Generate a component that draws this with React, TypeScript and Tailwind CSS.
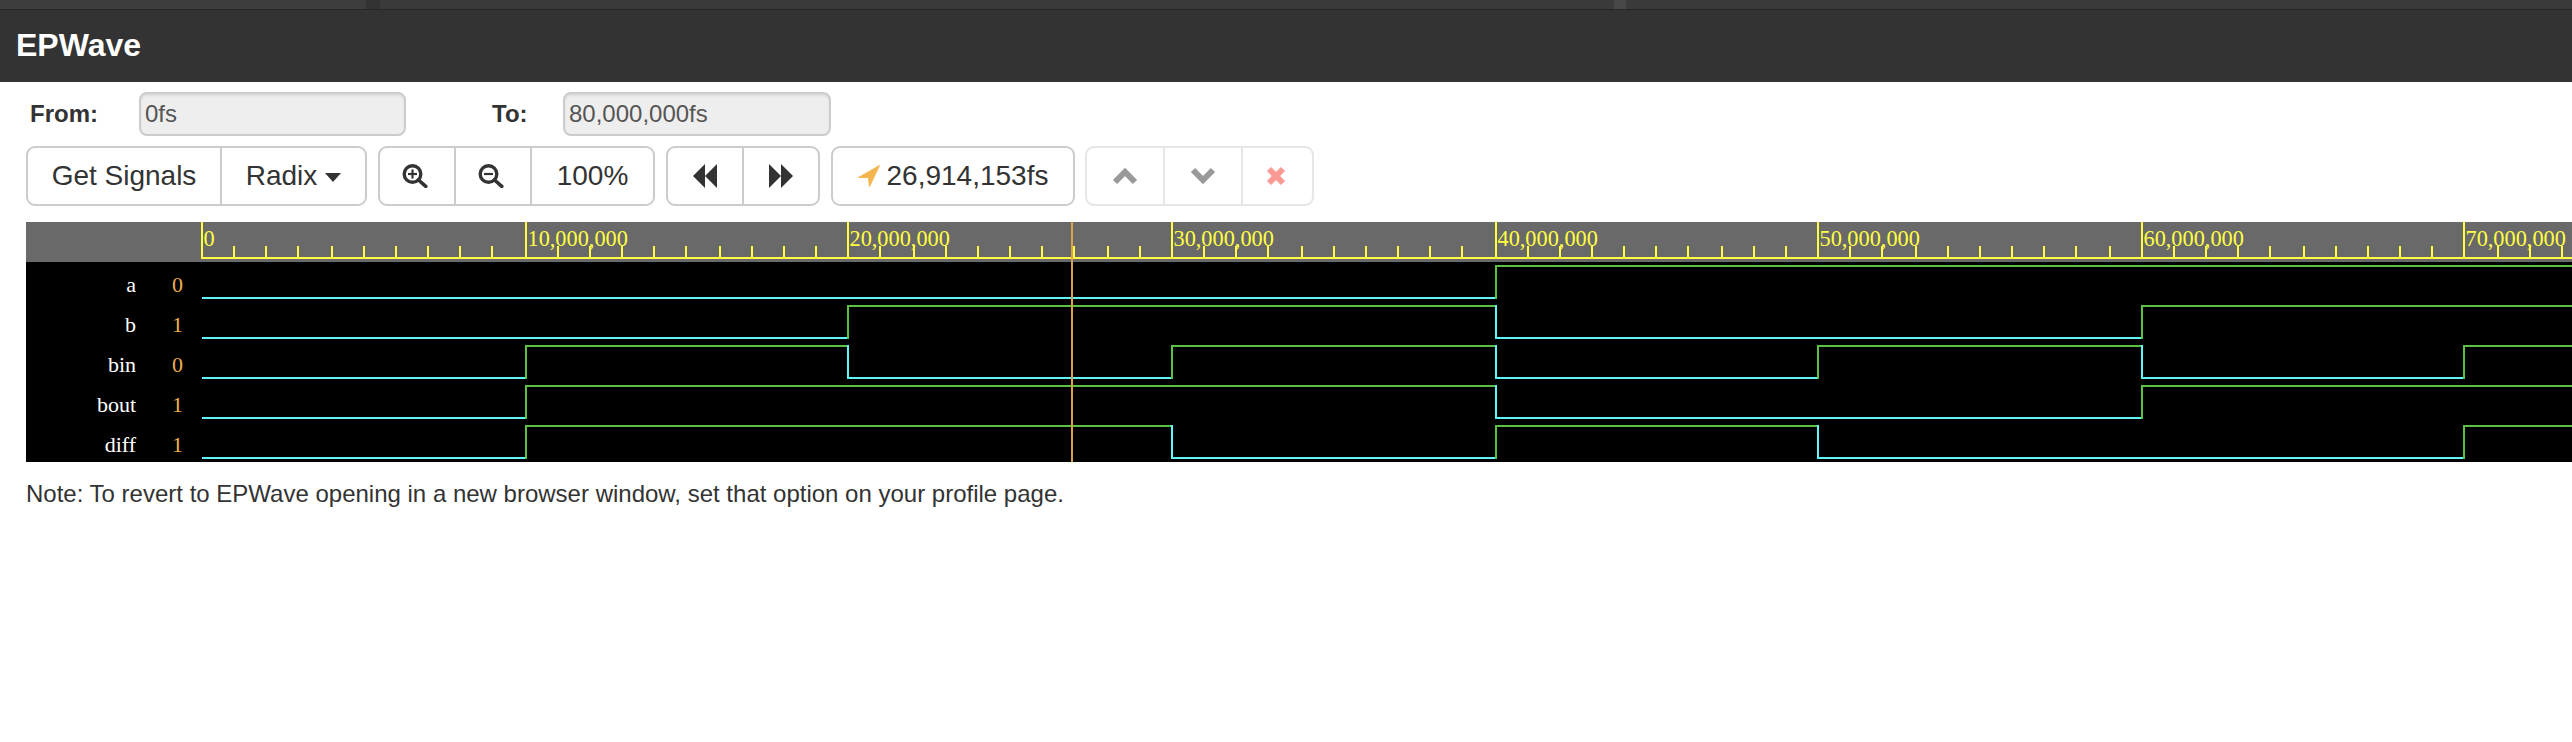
import React from "react";

const MAJORS = [1, 325, 647, 971, 1295, 1617, 1941, 2263];
const LABELS = ["0", "10,000,000", "20,000,000", "30,000,000", "40,000,000", "50,000,000", "60,000,000", "70,000,000"];

type Sig = { name: string; value: string; changes: number[]; startHigh: boolean };
const SIGNALS: Sig[] = [
  { name: "a", value: "0", changes: [4], startHigh: false },
  { name: "b", value: "1", changes: [2, 4, 6], startHigh: false },
  { name: "bin", value: "0", changes: [1, 2, 3, 4, 5, 6, 7], startHigh: false },
  { name: "bout", value: "1", changes: [1, 4, 6], startHigh: false },
  { name: "diff", value: "1", changes: [1, 3, 4, 5, 7], startHigh: false },
];

const CYAN = "#5ef6f6";
const GREEN = "#5cc043";
const END = 2400;

function Wave({ sig, row }: { sig: Sig; row: number }) {
  const low = 36 + row * 40;
  const high = 4 + row * 40;
  const pts = [1, ...sig.changes.map((c) => MAJORS[c]), END];
  let isHigh = sig.startHigh;
  const parts: React.ReactNode[] = [];
  for (let i = 0; i < pts.length - 1; i++) {
    const y = isHigh ? high : low;
    parts.push(
      <line key={`h${i}`} x1={pts[i]} x2={pts[i + 1]} y1={y} y2={y} stroke={isHigh ? GREEN : CYAN} strokeWidth={2} />
    );
    if (i < pts.length - 2) {
      parts.push(
        <line key={`v${i}`} x1={pts[i + 1]} x2={pts[i + 1]} y1={high - 1} y2={low + 1} stroke={isHigh ? CYAN : GREEN} strokeWidth={2} />
      );
    }
    isHigh = !isHigh;
  }
  return <g shapeRendering="crispEdges">{parts}</g>;
}

function Ruler() {
  const ticks: number[] = [];
  for (let n = 1; n < 74; n++) {
    if (n % 10 === 0) continue;
    ticks.push(2 * Math.round((202 + n * 32.325) / 2) - 201);
  }
  return (
    <svg width={2396} height={40} className="block shrink-0 font-['Liberation_Serif',serif]">
      <g shapeRendering="crispEdges" fill="#ffff44">
        <rect x={0} y={35} width={2396} height={2} />
        {MAJORS.map((m) => (
          <rect key={m} x={m - 1} y={0} width={2} height={36} />
        ))}
        {ticks.map((t) => (
          <rect key={t} x={t - 1} y={24} width={2} height={12} />
        ))}
      </g>
      {MAJORS.map((m, i) => (
        <text key={m} x={m + 1.5} y={24} fontSize={22.3} fill="#ffff44">
          {LABELS[i]}
        </text>
      ))}
    </svg>
  );
}

function ZoomIcon({ plus }: { plus: boolean }) {
  return (
    <svg width={26} height={24} viewBox="0 0 26 24" className="block">
      <circle cx={10.5} cy={10} r={8.3} fill="none" stroke="#333" strokeWidth={3.4} />
      <line x1={16.5} y1={16} x2={23.8} y2={22.3} stroke="#333" strokeWidth={3.6} strokeLinecap="round" />
      <line x1={6} y1={10} x2={15} y2={10} stroke="#333" strokeWidth={2.2} />
      {plus && <line x1={10.5} y1={5.5} x2={10.5} y2={14.5} stroke="#333" strokeWidth={2.2} />}
    </svg>
  );
}

function Cell({ className = "", children }: { className?: string; children: React.ReactNode }) {
  return <div className={`flex h-full items-center justify-center ${className}`}>{children}</div>;
}

export default function App() {
  return (
    <div className="min-h-[742px] w-[2572px] overflow-hidden bg-white font-['Liberation_Sans',Arial,sans-serif] text-[#333]">
      <header className="h-[82px] bg-[#333333]">
        <div className="flex h-[10px] border-b border-[#272727] bg-[#3a3a3a]">
          <div className="h-full w-[366px] bg-[#3d3d3d]" />
          <div className="h-full w-[14px] bg-[#333]" />
          <div className="h-full w-[1234px] bg-[#3a3a3a]" />
          <div className="h-full w-[12px] bg-[#484848]" />
          <div className="h-full flex-1 bg-[#3a3a3a]" />
        </div>
        <h1 className="pl-[16px] pt-[15px] text-[32px] font-bold leading-[40px] text-white">EPWave</h1>
      </header>

      <div className="mt-[10px] flex h-[44px] items-center text-[24px]">
        <label className="ml-[30px] w-[109px] font-bold">From:</label>
        <div className="flex h-full w-[267px] items-center rounded-[8px] border-2 border-[#ccc] bg-[#eeeeee] pl-[4px] text-[#555] shadow-[inset_0_2px_2px_rgba(0,0,0,0.08)]">
          0fs
        </div>
        <label className="ml-[86px] w-[71px] font-bold">To:</label>
        <div className="flex h-full w-[268px] items-center rounded-[8px] border-2 border-[#ccc] bg-[#eeeeee] pl-[4px] text-[#555] shadow-[inset_0_2px_2px_rgba(0,0,0,0.08)]">
          80,000,000fs
        </div>
      </div>

      <div className="ml-[26px] mt-[10px] flex h-[60px] items-center text-[28px]">
        <div className="flex h-full w-[341px] rounded-[9px] border-2 border-[#ccc]">
          <Cell className="w-[194px] border-r-2 border-[#ccc]">Get Signals</Cell>
          <Cell className="flex-1 gap-[8px]">
            <span>Radix</span>
            <span className="mt-[3px] h-0 w-0 border-x-[8.5px] border-t-[9px] border-x-transparent border-t-[#333]" />
          </Cell>
        </div>
        <div className="ml-[11px] flex h-full w-[277px] rounded-[9px] border-2 border-[#ccc]">
          <Cell className="w-[76px] border-r-2 border-[#ccc] pr-[5px]">
            <ZoomIcon plus />
          </Cell>
          <Cell className="w-[76px] border-r-2 border-[#ccc] pr-[5px]">
            <ZoomIcon plus={false} />
          </Cell>
          <Cell className="flex-1">100%</Cell>
        </div>
        <div className="ml-[11px] flex h-full w-[154px] rounded-[9px] border-2 border-[#ccc]">
          <Cell className="w-[76px] border-r-2 border-[#ccc]">
            <svg width={24} height={24} viewBox="0 0 24 24" className="block" fill="#333">
              <polygon points="0,12 12,0 12,24" />
              <polygon points="12,12 24,0 24,24" />
            </svg>
          </Cell>
          <Cell className="flex-1">
            <svg width={24} height={24} viewBox="0 0 24 24" className="block" fill="#333">
              <polygon points="24,12 12,0 12,24" />
              <polygon points="12,12 0,0 0,24" />
            </svg>
          </Cell>
        </div>
        <div className="ml-[11px] flex h-full w-[244px] items-center justify-center gap-[7px] rounded-[9px] border-2 border-[#ccc]">
          <svg width={22} height={22} viewBox="0 0 22 22" className="block" fill="#f5b54e" stroke="#f5b54e" strokeWidth={1} strokeLinejoin="round">
            <polygon points="21.5,0.5 0.5,12.5 10.5,12.5 11.5,21.5" />
          </svg>
          <span>26,914,153fs</span>
        </div>
        <div className="ml-[10px] flex h-full w-[229px] rounded-[9px] border-2 border-[#e6e6e6]">
          <Cell className="w-[78px] border-r-2 border-[#e6e6e6]">
            <svg width={26} height={18} viewBox="0 0 26 18" className="block" fill="none" stroke="#999" strokeWidth={6}>
              <polyline points="3,15 13,5 23,15" />
            </svg>
          </Cell>
          <Cell className="w-[78px] border-r-2 border-[#e6e6e6]">
            <svg width={26} height={18} viewBox="0 0 26 18" className="block" fill="none" stroke="#999" strokeWidth={6}>
              <polyline points="3,3 13,13 23,3" />
            </svg>
          </Cell>
          <Cell className="flex-1 pr-[3px]">
            <svg width={20} height={20} viewBox="0 0 20 20" className="block" fill="none" stroke="#fa9a94" strokeWidth={6}>
              <line x1={3} y1={3} x2={17} y2={17} />
              <line x1={17} y1={3} x2={3} y2={17} />
            </svg>
          </Cell>
        </div>
      </div>

      <section className="relative ml-[26px] mt-[16px] h-[240px] overflow-hidden bg-black">
        <div className="flex h-[40px] bg-[#696969]">
          <div className="w-[175px] shrink-0" />
          <Ruler />
        </div>
        <div className="flex h-[200px]">
          <div className="w-[175px] shrink-0 font-['Liberation_Serif',serif] text-[22px]">
            {SIGNALS.map((s) => (
              <div key={s.name} className="flex h-[40px] pt-[5px] leading-[35px]">
                <span className="w-[110px] text-right text-white">{s.name}</span>
                <span className="ml-[36px] text-[#f0ad4e]">{s.value}</span>
              </div>
            ))}
          </div>
          <svg width={2396} height={200} className="block shrink-0">
            {SIGNALS.map((s, i) => (
              <Wave key={s.name} sig={s} row={i} />
            ))}
          </svg>
        </div>
        <div className="absolute bottom-0 left-[1045px] top-0 w-[2px] bg-[#d9a34e]" />
      </section>

      <p className="ml-[26px] mt-[18px] text-[24px] leading-[28px]">
        Note: To revert to EPWave opening in a new browser window, set that option on your profile page.
      </p>
    </div>
  );
}
